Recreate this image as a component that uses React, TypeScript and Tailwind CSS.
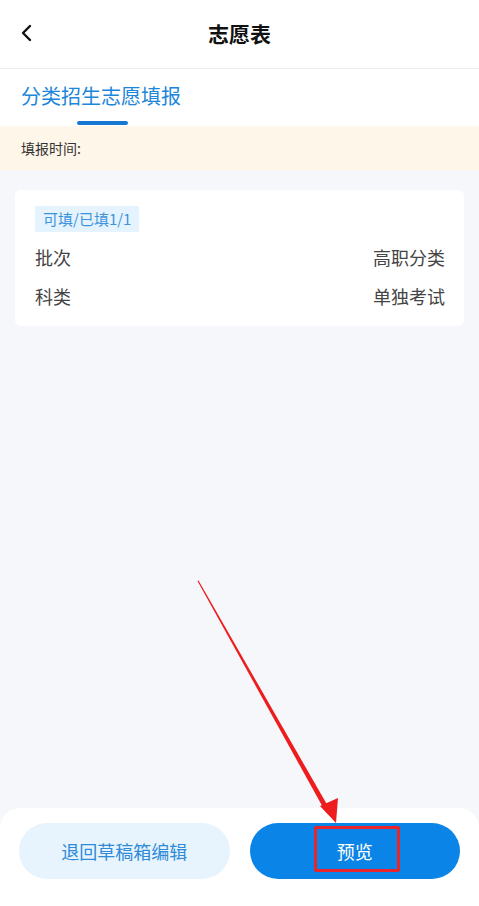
import React from "react";

export default function App() {
  return (
    <div
      className="relative w-[479px] h-[906px] bg-[#f5f7fa] flex flex-col overflow-hidden"
      style={{ fontFamily: '"Noto Sans CJK SC", "Noto Sans", sans-serif' }}
    >
      {/* 顶部导航 */}
      <div className="h-[69px] bg-white flex items-center relative border-b border-[#ebebeb] shrink-0">
        <svg className="absolute left-[19px] top-[24px]" width="16" height="18" viewBox="0 0 16 18">
          <path d="M11 2 L4 9 L11 16" fill="none" stroke="#111" strokeWidth="2.4" strokeLinecap="round" strokeLinejoin="round" />
        </svg>
        <div className="w-full text-center text-[21px] font-bold text-[#111]">志愿表</div>
      </div>

      {/* 标签 */}
      <div className="h-[57px] bg-white relative shrink-0">
        <div className="pl-[21px] pt-[12px] text-[20px] text-[#1d86d9] leading-[30px]">分类招生志愿填报</div>
        <div className="absolute left-[77px] top-[52px] w-[51px] h-[4px] rounded-full bg-[#1578d3]" />
      </div>

      {/* 填报时间 */}
      <div className="h-[44px] bg-[#fdf6e9] flex items-center pl-[21px] text-[14px] text-[#333] shrink-0">
        填报时间:
      </div>

      {/* 卡片 */}
      <div className="px-[15px] pt-[20px]">
        <div className="bg-white rounded-[6px] pl-[20px] pr-[19px] pt-[16px] pb-[17px]">
          <div className="inline-block bg-[#e4f3fe] text-[#3d93dc] text-[15px] leading-[26px] px-[8px]">可填/已填1/1</div>
          <div className="flex justify-between text-[18px] text-[#444] mt-[12px] leading-[26px]">
            <span>批次</span>
            <span>高职分类</span>
          </div>
          <div className="flex justify-between text-[18px] text-[#444] mt-[13px] leading-[26px]">
            <span>科类</span>
            <span>单独考试</span>
          </div>
        </div>
      </div>

      <div className="flex-1" />

      {/* 底部按钮 */}
      <div className="h-[98px] bg-white rounded-t-[20px] px-[19px] pt-[15px] flex gap-[20px] shrink-0">
        <button className="flex-1 h-[56px] rounded-full bg-[#e7f4fd] text-[#2f8ad8] text-[18px]">退回草稿箱编辑</button>
        <button className="flex-1 h-[56px] rounded-full bg-[#0a84e6] text-white text-[18px]">预览</button>
      </div>

      {/* 标注 */}
      <div className="absolute left-[314px] top-[826px] w-[86px] h-[46px] border-[3px] border-[#e8252b] rounded-[2px]" />
      <svg className="absolute left-0 top-0 pointer-events-none" width="479" height="906" viewBox="0 0 479 906">
        <polygon points="197.5,581 198.5,580.5 329,808 325,811" fill="#ee1c1c" />
        <polygon points="320,806 338,798 336,823" fill="#ee1c1c" />
      </svg>
    </div>
  );
}
